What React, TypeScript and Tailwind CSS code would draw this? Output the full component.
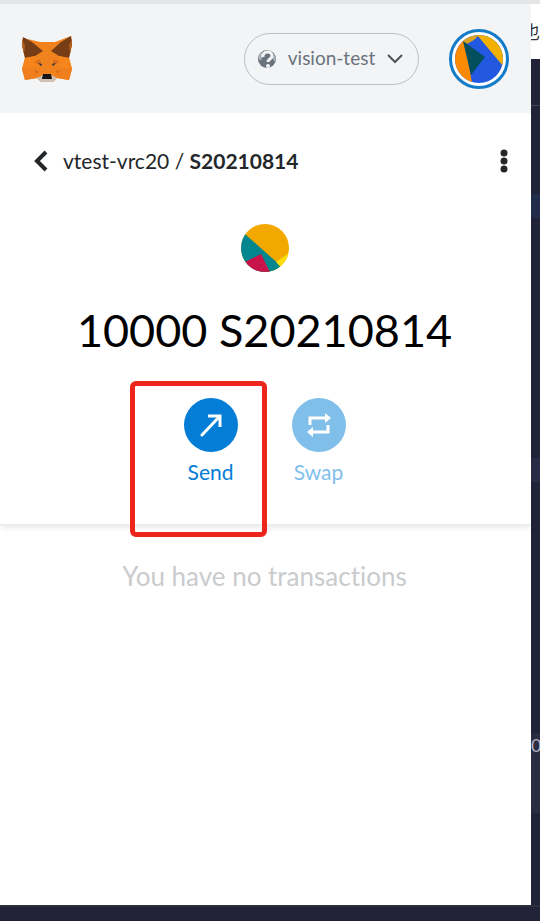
import type { ReactNode } from 'react';

function FoxLogo() {
  return (
    <svg viewBox="0 0 50 46" className="h-[46px] w-[50px]" aria-hidden="true">
      <path d="M1 2 L18 6 H33 L49 0 L50 8 L47 22 L50 33 L47 44 L35 42 L31 46 H19 L15 42 L3 44 L0 33 L3 22 L0 9 Z" fill="#f1831f" />
      <path d="M1 1 L10 6 L21 15 L13 20 L3 22 L0 9 Z" fill="#763d16" />
      <path d="M49 0 L39 6 L29 15 L37 20 L47 22 L50 8 Z" fill="#763d16" />
      <path d="M0 3 L3 9 L2 18 L0 9 Z M50 3 L47 9 L48 18 L50 9 Z" fill="#b35f1c" />
      <path d="M3 22 L13 20 L16 30 L0 33 Z M47 22 L37 20 L34 30 L50 33 Z" fill="#f6851b" />
      <path d="M0 33 L16 33 L15 42 L3 44 Z M50 33 L34 33 L35 42 L47 44 Z" fill="#ee7f1c" />
      <path d="M12 26 L18 23 L20 30 Z M38 26 L32 23 L30 30 Z" fill="#dc6f1a" />
      <path d="M12 34 L16 35 L15 38 Z M38 34 L34 35 L35 38 Z" fill="#d7691a" />
      <path d="M16 27 L20 28 L19 30 Z M34 27 L30 28 L31 30 Z" fill="#233447" />
      <path d="M15 42 L21 39 H29 L35 42 L31 46 H19 Z" fill="#cdc0b5" />
      <path d="M21 38 H29 L30 43 H20 Z" fill="#161616" />
    </svg>
  );
}

function AccountAvatar() {
  return (
    <svg viewBox="0 0 48 48" className="size-12 rounded-full" aria-hidden="true">
      <rect width="48" height="48" fill="#2358e1" />
      <path d="M0 0 H9 L17 48 H0 Z" fill="#f98a01" />
      <path d="M8 6 L12 0 H24 L19 5 L12 9 Z" fill="#d9a321" />
      <path d="M22 0 H48 V31 Z" fill="#f2b002" />
      <path d="M8 6 L30 22 L16 40 Z" fill="#034f5d" />
    </svg>
  );
}

function TokenIcon() {
  return (
    <svg viewBox="0 0 48 48" className="size-12 rounded-full" aria-hidden="true">
      <rect width="48" height="48" fill="#f3a800" />
      <path d="M0 6 L5 11 L40 42 L34 48 H0 Z" fill="#03868d" />
      <path d="M4 38 L20 30 L29 48 H4 Z" fill="#c8144b" />
      <path d="M35 38 L48 29 V48 H44 Z" fill="#fade05" />
    </svg>
  );
}

function ActionButton({ label, disabled, children }: { label: string; disabled?: boolean; children: ReactNode }) {
  return (
    <button
      type="button"
      disabled={disabled}
      className="flex w-[54px] flex-col items-center gap-2 text-[#037dd6] disabled:text-[#81bfeb]"
    >
      <span className={`flex size-[54px] items-center justify-center rounded-full ${disabled ? 'bg-[#81bfeb]' : 'bg-[#037dd6]'}`}>
        {children}
      </span>
      <span className="text-[21px] leading-6">{label}</span>
    </button>
  );
}

export default function App() {
  return (
    <div className="flex min-h-screen flex-col bg-[#222338] font-['Lato','Noto_Sans_CJK_SC',sans-serif] [font-variant-ligatures:none]">
      <div className="flex flex-1">
        {/* Wallet popup */}
        <main className="flex min-w-0 flex-1 flex-col bg-white">
          <header className="flex h-[113px] items-center justify-between border-t-4 border-[#e4e5e7] bg-[#f2f4f5] px-[22px]">
            <FoxLogo />
            <div className="flex items-center gap-[30px]">
              <button
                type="button"
                className="flex h-[52px] w-[175px] items-center rounded-full border border-[#bbc0c5] px-3 text-[#6a737d]"
              >
                <svg viewBox="0 0 20 20" className="size-5" aria-hidden="true">
                  <circle cx="10" cy="10" r="9" fill="#6a737d" />
                  <path d="M1 8 L3 4 L7 3 L6 8 L3 12 Z M14 3 L19 8 L18 13 L15 9 Z" fill="#a9b0b6" />
                  <path d="M6 8 C5 2 15 1 15 7 C15 10 11 10 11 13" fill="none" stroke="#f2f4f5" strokeWidth="3" />
                  <circle cx="11" cy="17" r="2" fill="#f2f4f5" />
                </svg>
                <span className="flex-1 text-center text-[19px]">vision-test</span>
                <svg viewBox="0 0 18 12" className="mr-0.5 h-3 w-[18px]" fill="none" stroke="#4d5359" strokeWidth="2" aria-hidden="true">
                  <path d="M2 2 L9 9 L16 2" />
                </svg>
              </button>
              <button
                type="button"
                aria-label="Account"
                className="flex size-[60px] items-center justify-center rounded-full border-3 border-[#137bc7] bg-white"
              >
                <AccountAvatar />
              </button>
            </div>
          </header>

          <nav className="flex h-24 items-center justify-between pr-5 pl-8">
            <div className="flex items-center text-[21px] text-[#24272a]">
              <button type="button" aria-label="Back" className="mr-[13px]">
                <svg viewBox="0 0 18 22" className="h-[22px] w-[18px]" fill="none" stroke="#24272a" strokeWidth="4" aria-hidden="true">
                  <path d="M14 2 L5 11 L14 20" />
                </svg>
              </button>
              <a href="#asset" className="whitespace-pre">vtest-vrc20 / </a>
              <span className="font-bold">S20210814</span>
            </div>
            <button type="button" aria-label="Asset options">
              <svg viewBox="0 0 14 26" className="h-[26px] w-[14px]" fill="#24272a" aria-hidden="true">
                <circle cx="7" cy="5" r="3.5" />
                <circle cx="7" cy="13" r="3.5" />
                <circle cx="7" cy="21" r="3.5" />
              </svg>
            </button>
          </nav>

          <section className="flex flex-col items-center border-b-2 border-[#eceded] pt-[15px] pr-0.5 pb-10 shadow-md shadow-black/5">
            <TokenIcon />
            <h1 className="mt-8 text-[45px] leading-[52px] text-black">10000 S20210814</h1>
            <div className="mt-[42px] flex gap-[54px]">
              <div className="relative">
                <ActionButton label="Send">
                  <svg viewBox="0 0 24 24" className="size-6" fill="none" stroke="white" strokeWidth="3" aria-hidden="true">
                    <path d="M3 22 L20 4" strokeLinecap="round" />
                    <path d="M9 3 H21 V14" />
                  </svg>
                </ActionButton>
                {/* Highlight frame around the send action */}
                <div className="pointer-events-none absolute -top-[17px] -left-[54px] h-[156px] w-[137px] rounded-md border-5 border-[#ee251d]" />
              </div>
              <ActionButton label="Swap" disabled>
                <svg viewBox="0 0 26 26" className="size-[26px]" aria-hidden="true">
                  <path d="M4 13 V6 H20 M22 13 V20 H6" fill="none" stroke="white" strokeWidth="3" />
                  <path d="M19 1 L25 6 L19 11 Z M7 15 L1 20 L7 25 Z" fill="white" />
                </svg>
              </ActionButton>
            </div>
          </section>

          <p className="mt-8 pr-0.5 text-center text-[26px] leading-9 text-[#c9cbcd]">You have no transactions</p>
        </main>

        {/* Edge of the page behind the popup */}
        <aside className="flex w-[9px] flex-col overflow-hidden">
          <div className="flex h-[59px] justify-end border-t-4 border-[#e4e5e7] bg-white pt-4 text-[18px] leading-6 text-[#333333]">
            <span>也</span>
          </div>
          <div className="h-[47px] border-b border-[#414257]" />
          <div className="mt-[88px] h-6 bg-[#202c49]" />
          <div className="mt-60 h-6 bg-[#292a45]" />
          <div className="mt-[251px] h-20 bg-[#2b2c42] text-[18px] leading-6 text-[#b3b4c4]">0</div>
        </aside>
      </div>
      <footer className="h-4 border-t-2 border-[#2c303e]" />
    </div>
  );
}
